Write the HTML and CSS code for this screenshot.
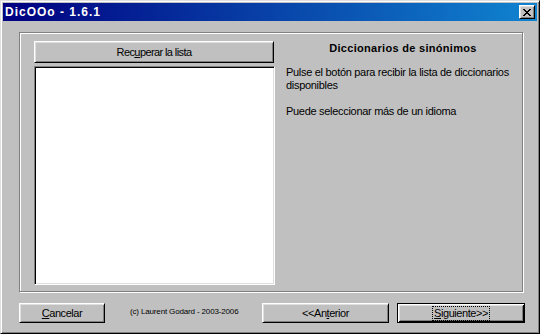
FILE: index.html
```html
<!DOCTYPE html>
<html lang="es">
<head>
<meta charset="utf-8">
<title>DicOOo - 1.6.1</title>
<link rel="stylesheet" href="styles.css">
</head>
<body>
<div class="window">
  <div class="titlebar">
    <span class="title">DicOOo - 1.6.1</span>
    <div class="close">
      <svg width="8" height="7" viewBox="0 0 8 7" shape-rendering="crispEdges"><path fill="#000" d="M0 0h2v1h-2z M6 0h2v1h-2z M1 1h2v1h-2z M5 1h2v1h-2z M2 2h4v1h-4z M3 3h2v1h-2z M2 4h4v1h-4z M1 5h2v1h-2z M5 5h2v1h-2z M0 6h2v1h-2z M6 6h2v1h-2z"/></svg>
    </div>
  </div>
  <div class="content">
    <div class="frame">
      <div class="left-col">
        <div class="btn btn-fetch">Rec<u>u</u>perar la lista</div>
        <div class="listbox"></div>
      </div>
      <div class="right-col">
        <h1 class="heading">Diccionarios de sinónimos</h1>
        <p class="para">Pulse el botón para recibir la lista de diccionarios disponibles</p>
        <p class="para">Puede seleccionar más de un idioma</p>
      </div>
    </div>
    <div class="footer">
      <div class="btn btn-cancel"><span><u>C</u>ancelar</span></div>
      <span class="copy">(c) Laurent Godard - 2003-2006</span>
      <div class="btn btn-prev"><span>&lt;&lt;An<u>t</u>erior</span></div>
      <div class="btn btn-next default"><span class="focus"><u>S</u>iguiente&gt;&gt;</span></div>
    </div>
  </div>
</div>
</body>
</html>
```

FILE: styles.css
```css
html, body {
  margin: 0;
  padding: 0;
  background: #c0c0c0;
}

.window {
  box-sizing: border-box;
  width: 540px;
  height: 334px;
  background: #c0c0c0;
  border: 1px solid;
  border-color: #dfdfdf #000 #000 #dfdfdf;
  box-shadow: inset 1px 1px #fff, inset -1px -1px #808080;
  padding: 2px;
  font-family: "Liberation Sans", Arial, sans-serif;
  font-size: 11px;
  color: #000;
}

.titlebar {
  height: 18px;
  background: linear-gradient(90deg, #000080, #1084d0);
  display: flex;
  align-items: center;
  justify-content: space-between;
  padding: 0 2px;
}

.title {
  color: #fff;
  font-weight: bold;
  font-size: 12px;
  line-height: 18px;
  letter-spacing: 1px;
}

.close {
  box-sizing: border-box;
  width: 16px;
  height: 14px;
  background: #c0c0c0;
  border: 1px solid;
  border-color: #fff #000 #000 #fff;
  box-shadow: inset 1px 1px #dfdfdf, inset -1px -1px #808080;
  display: flex;
  align-items: center;
  justify-content: center;
}

.close svg {
  display: block;
  margin-left: -1px;
}

.content {
  padding: 11px 0 0 16px;
}

.frame {
  box-sizing: border-box;
  width: 504px;
  height: 260px;
  border: 1px solid #808080;
  box-shadow: inset 1px 1px #fff, 1px 1px #fff;
  padding: 8px 0 0 14px;
  display: flex;
}

.left-col {
  width: 240px;
  display: flex;
  flex-direction: column;
  gap: 3px;
}

.btn {
  box-sizing: border-box;
  background: #c0c0c0;
  border: 1px solid;
  border-color: #fff #000 #000 #fff;
  box-shadow: inset 1px 1px #dfdfdf, inset -1px -1px #808080;
  display: flex;
  align-items: center;
  justify-content: center;
  font-size: 11px;
  line-height: 13px;
  letter-spacing: -0.45px;
}

.btn-fetch {
  height: 22px;
  letter-spacing: -0.6px;
}

.listbox {
  box-sizing: border-box;
  width: 241px;
  height: 219px;
  background: #fff;
  border: 1px solid;
  border-color: #808080 #fff #fff #808080;
  box-shadow: inset 1px 1px #000, inset -1px -1px #dfdfdf;
}

.right-col {
  width: 234px;
  margin-left: 12px;
}

.heading {
  margin: 1px 0 0 0;
  font-size: 11px;
  font-weight: bold;
  line-height: 13px;
  text-align: center;
  letter-spacing: 0.3px;
}

.para {
  margin: 11px 0 0 0;
  line-height: 13px;
  letter-spacing: -0.3px;
}

.para + .para {
  margin-top: 13px;
}

.footer {
  display: flex;
  align-items: center;
  margin-top: 11px;
  height: 20px;
}

.btn-cancel {
  width: 86px;
  height: 20px;
}

.copy {
  font-size: 8px;
  margin-left: 25px;
  width: 107px;
  white-space: nowrap;
  letter-spacing: -0.15px;
  margin-top: -3px;
}

.btn-prev {
  width: 127px;
  height: 20px;
  margin-left: 25px;
}

.btn-next {
  width: 128px;
  height: 20px;
  margin-left: 8px;
}

.default {
  border-color: #000;
  box-shadow: inset 1px 1px #fff, inset -1px -1px #000, inset 2px 2px #dfdfdf, inset -2px -2px #808080;
}

.focus {
  border: 1px dotted #000;
  padding: 0 1px;
  line-height: 13px;
}
```
